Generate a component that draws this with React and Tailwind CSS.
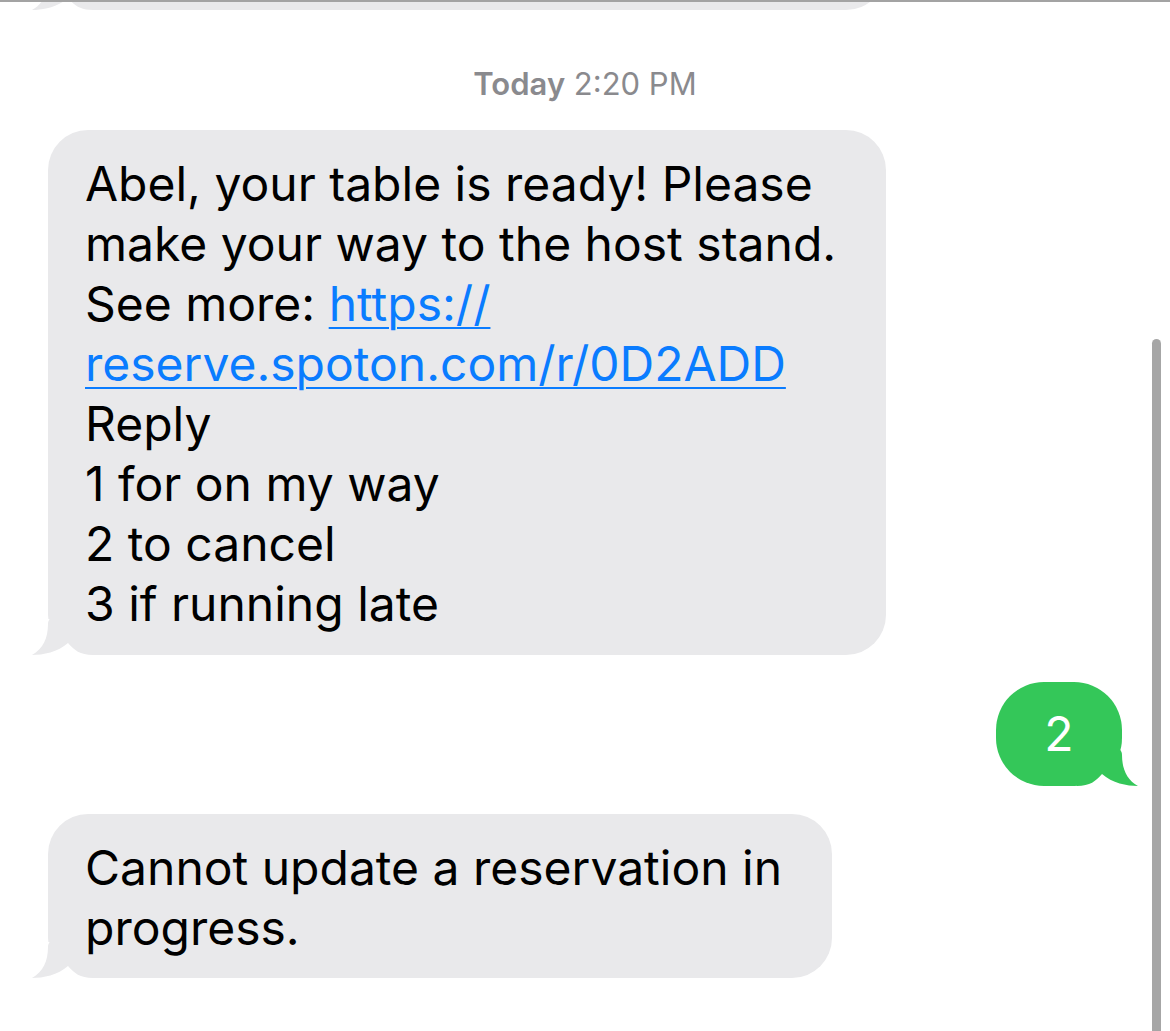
import React from "react";

const FONT = { fontFamily: "Inter, 'Liberation Sans', sans-serif" };

// bubble tail, drawn at the bottom corner; white rect clears the body corner
const Tail = ({ fill, flip }) => (
  <svg
    width="62"
    height="36"
    viewBox="0 0 62 36"
    className={
      flip
        ? "absolute bottom-0 right-[-17px] -scale-x-100"
        : "absolute bottom-0 left-[-17px]"
    }
  >
    <rect x="0" y="0" width="62" height="36" fill="#ffffff" />
    <path
      d="M18.6,0 C17.6,1.5 17,3 17,5 C17,19 12,30 1,36 C12,36 27,33 37,24 C43,31 49,36 62,36 L62,0 Z"
      fill={fill}
    />
  </svg>
);

const Received = ({ width, children, className = "" }) => (
  <div
    className={`relative ml-[48px] rounded-[40px] bg-[#e9e9eb] pl-[37px] pr-[30px] text-[48px] leading-[60px] text-black ${className}`}
    style={{ width }}
  >
    <Tail fill="#e9e9eb" />
    <div className="relative">{children}</div>
  </div>
);

const Link = ({ children }) => (
  <span className="text-[#0a7cff] underline decoration-2 underline-offset-[6px]">
    {children}
  </span>
);

export default function App() {
  return (
    <div
      className="relative h-[1031px] w-[1170px] overflow-hidden border-t-2 border-[#a3a3a3] bg-white"
      style={FONT}
    >
      {/* bottom of the previous message */}
      <div className="flex h-[8px] items-end overflow-hidden">
        <Received width={838} className="h-[80px] shrink-0" />
      </div>

      <div className="mt-[55px] text-center text-[31px] leading-[38px] text-[#8a8a8e]">
        <span className="font-semibold">Today</span> 2:20 PM
      </div>

      <Received width={838} className="mt-[27px] pt-[24px] pb-[21px]">
        <div>Abel, your table is ready! Please</div>
        <div>make your way to the host stand.</div>
        <div>
          See more: <Link>https://</Link>
        </div>
        <div>
          <Link>reserve.spoton.com/r/0D2ADD</Link>
        </div>
        <div>Reply</div>
        <div>1 for on my way</div>
        <div>2 to cancel</div>
        <div>3 if running late</div>
      </Received>

      <div className="mt-[27px] flex justify-end pr-[48px]">
        <div className="relative h-[104px] w-[126px] rounded-[48px] bg-[#34c759] text-[48px] leading-[60px] text-white">
          <Tail fill="#34c759" flip />
          <div className="relative flex h-full items-center justify-center">2</div>
        </div>
      </div>

      <Received width={784} className="mt-[28px] pt-[24px] pb-[20px]">
        <div>Cannot update a reservation in</div>
        <div>progress.</div>
      </Received>

      {/* scroll indicator */}
      <div className="absolute right-[9px] top-[337px] h-[720px] w-[9px] rounded-t-full bg-[#a6a6a6]" />
    </div>
  );
}
